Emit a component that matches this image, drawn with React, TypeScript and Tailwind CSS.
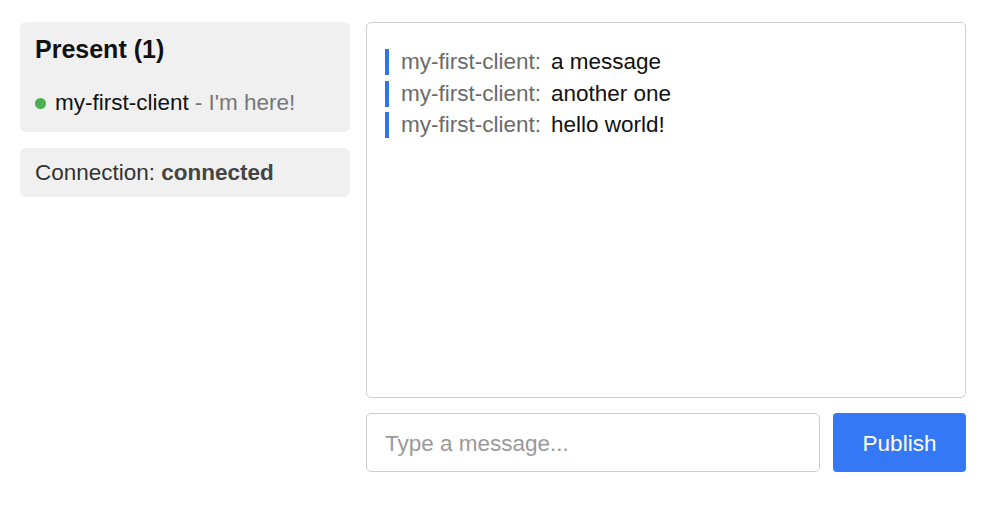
import React from "react";

export default function App() {
  const msgs = ["a message", "another one", "hello world!"];
  return (
    <div
      className="flex gap-4 p-5 pt-[22px] bg-white h-[508px] w-[1000px]"
      style={{ fontFamily: '"Liberation Sans", Arial, sans-serif' }}
    >
      <div className="flex flex-col gap-4 w-[330px] shrink-0">
        <div className="bg-[#f0f0f0] rounded-[6px] h-[110px] px-[15px] pt-[12px]">
          <div className="text-[25px] leading-[30px] font-bold text-[#111]">Present (1)</div>
          <div className="flex items-center mt-[26px] text-[22.5px] leading-[26px]">
            <span className="w-[11px] h-[11px] rounded-full bg-[#4caf50] mr-[9px]" />
            <span className="text-[#111]">my-first-client</span>
            <span className="text-[#777] ml-[6px]">- I'm here!</span>
          </div>
        </div>
        <div className="bg-[#f0f0f0] rounded-[6px] h-[49px] px-[15px] flex items-center text-[22.5px] text-[#333]">
          <span>
            Connection: <b className="text-[#444]">connected</b>
          </span>
        </div>
      </div>
      <div className="flex flex-col w-[600px]">
        <div className="h-[376px] border border-[#d0d0d0] rounded-[5px] px-[18px] pt-[26px] flex flex-col gap-[5.5px]">
          {msgs.map((m) => (
            <div key={m} className="flex items-center text-[22.5px] leading-[26px]">
              <span className="w-[4px] h-[26px] bg-[#2f74f0] mr-[12px]" />
              <span className="text-[#6b6b6b] mr-[10px]">my-first-client:</span>
              <span className="text-[#111]">{m}</span>
            </div>
          ))}
        </div>
        <div className="flex gap-[13px] mt-[15px]">
          <input
            className="flex-1 h-[59px] border border-[#cfcfcf] rounded-[5px] px-[18px] pt-[3px] text-[22.5px] placeholder:text-[#9a9a9a] outline-none"
            placeholder="Type a message..."
            style={{ fontFamily: '"Liberation Sans", Arial, sans-serif' }}
          />
          <button className="w-[133px] h-[59px] pt-[3px] bg-[#3478f6] rounded-[4px] text-white text-[22.5px]">
            Publish
          </button>
        </div>
      </div>
    </div>
  );
}
